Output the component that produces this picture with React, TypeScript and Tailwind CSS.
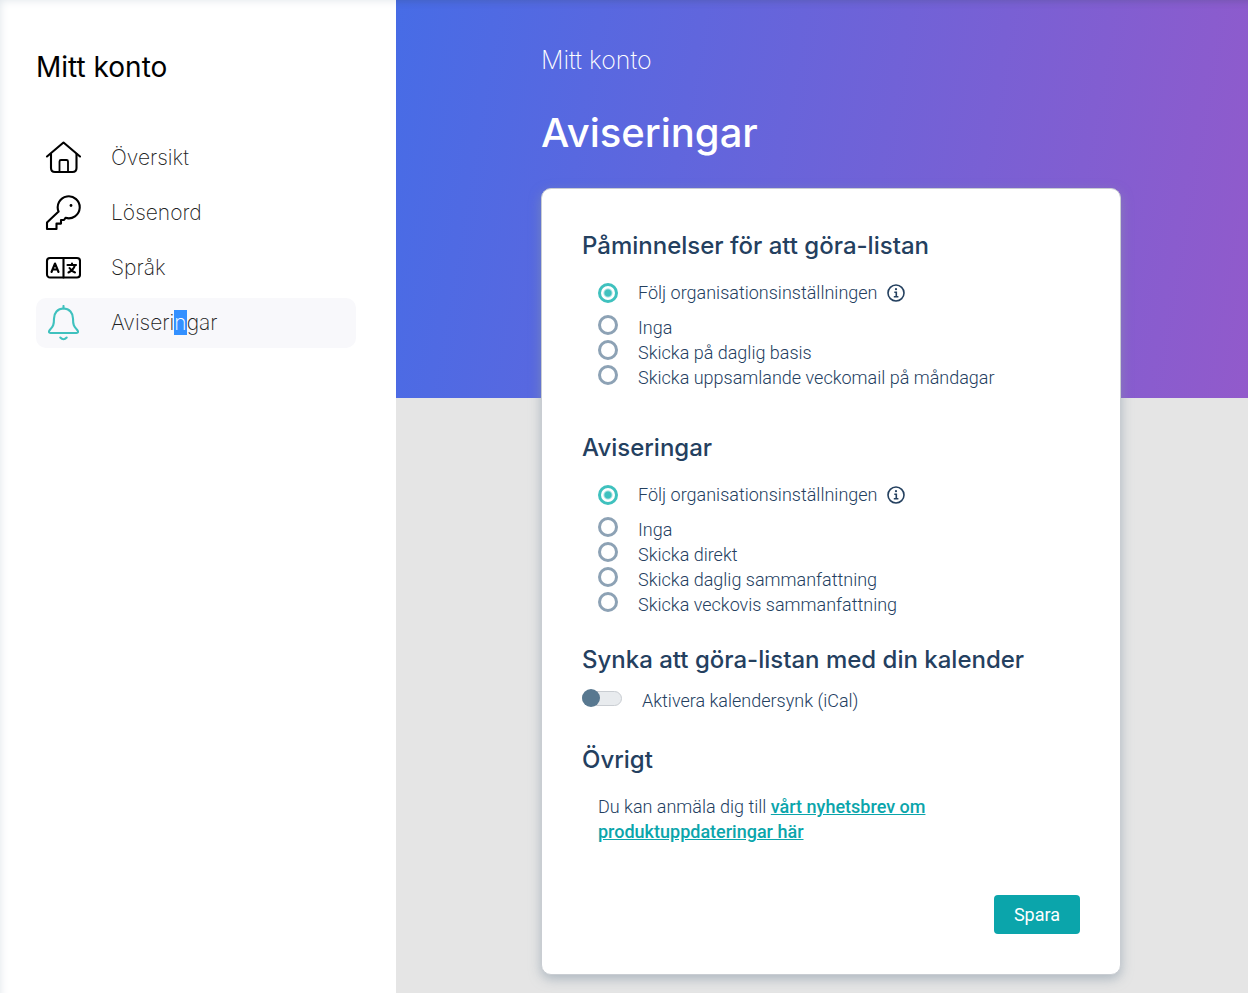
import { useState } from "react";
import type { ReactNode } from "react";

const iconProps = {
  viewBox: "0 0 36 36",
  fill: "none",
  stroke: "currentColor",
  strokeWidth: 2.1,
  strokeLinecap: "round",
  strokeLinejoin: "round",
  className: "w-9 h-9 shrink-0",
  "aria-hidden": true,
} as const;

function HomeIcon() {
  return (
    <svg {...iconProps}>
      <path d="M2 16.5 L18.5 2.5 L35 16.5" />
      <path d="M6 14 V28 Q6 32 10 32 H27.5 Q31.5 32 31.5 28 V14" />
      <path
        d="M14.5 32 V21.5 Q14.5 20 16 20 H21.5 Q23 20 23 21.5 V32"
        strokeWidth="1.8"
      />
    </svg>
  );
}

function KeyIcon() {
  return (
    <svg {...iconProps}>
      <path d="M13.6 16.6 A11 11 0 1 1 20.5 22.8 L19 25 H16 V28.6 H11.5 V34 H2 V27.5 Z" />
      <circle cx="26" cy="10.5" r="1.4" fill="currentColor" stroke="none" />
    </svg>
  );
}

function LanguageIcon() {
  return (
    <svg {...iconProps}>
      <rect x="2" y="8" width="33" height="19.5" rx="3" />
      <path d="M18.5 8 V27.5" />
      <path d="M6.5 22 L10 13.5 L13.5 22 M7.5 19.5 H12.5" />
      <path d="M22.5 15 H31 M27 13.5 V15 M29.8 15.5 Q28.5 20 23.5 22.5 M24.5 18 Q27 21.5 30 22.5" />
    </svg>
  );
}

function BellIcon() {
  return (
    <svg {...iconProps}>
      <path d="M18.5 1 V3.5" />
      <path d="M18.5 3.5 C12.5 3.5 9 8 9 13.5 C9 21 7.5 21.5 4.8 25 C3.2 27 4 28 5.5 28 H31.5 C33 28 33.8 27 32.2 25 C29.5 21.5 28 21 28 13.5 C28 8 24.5 3.5 18.5 3.5 Z" />
      <path d="M15.3 32.5 Q18.5 36 21.7 32.5" />
    </svg>
  );
}

function InfoIcon() {
  return (
    <svg
      viewBox="0 0 18 18"
      fill="none"
      stroke="currentColor"
      strokeWidth="1.6"
      className="w-[18px] h-[18px]"
      aria-hidden="true"
    >
      <circle cx="9" cy="9" r="8" />
      <circle cx="9" cy="5.2" r="1.1" fill="currentColor" stroke="none" />
      <path d="M7.3 8.2 H9.3 V12.8 M6.8 12.8 H11.4" />
    </svg>
  );
}

const navItems: { id: string; label: ReactNode; icon: ReactNode }[] = [
  { id: "oversikt", label: "Översikt", icon: <HomeIcon /> },
  { id: "losenord", label: "Lösenord", icon: <KeyIcon /> },
  { id: "sprak", label: "Språk", icon: <LanguageIcon /> },
  {
    id: "aviseringar",
    label: (
      <>
        Aviseri
        <mark className="bg-[#3390ff] text-white">n</mark>
        gar
      </>
    ),
    icon: <BellIcon />,
  },
];

const FOLLOW = "Följ organisationsinställningen";

function SectionTitle({ children }: { children: ReactNode }) {
  return (
    <span className="block font-[Inter,sans-serif] text-2xl leading-[34px] font-medium">
      {children}
    </span>
  );
}

function RadioSection({
  name,
  title,
  options,
}: {
  name: string;
  title: string;
  options: string[];
}) {
  const [value, setValue] = useState(FOLLOW);

  return (
    <fieldset>
      <legend>
        <SectionTitle>{title}</SectionTitle>
      </legend>
      <div className="mt-[17px] pl-4">
        {[FOLLOW, ...options].map((option) => (
          <div key={option} className="flex gap-2.5 items-center first:mb-2.5">
            <label
              className={
                option === FOLLOW
                  ? "flex items-center gap-5"
                  : "flex items-start gap-5"
              }
            >
              <input
                type="radio"
                name={name}
                checked={value === option}
                onChange={() => setValue(option)}
                className="appearance-none w-5 h-5 shrink-0 rounded-full border-[3px] border-[#8da2b5] checked:border-[#3fc1be] checked:bg-[radial-gradient(circle,#3fc1be_3px,transparent_5px)]"
              />
              {option}
            </label>
            {option === FOLLOW && (
              <button type="button" aria-label="Information">
                <InfoIcon />
              </button>
            )}
          </div>
        ))}
      </div>
    </fieldset>
  );
}

export default function App() {
  const [calendarSync, setCalendarSync] = useState(false);

  return (
    <div className="flex min-h-screen bg-[#e5e5e5] font-[Roboto,sans-serif]">
      <aside className="w-[396px] shrink-0 bg-white px-9 pt-[47px] shadow-[inset_8px_8px_10px_-8px_#dfe5ea]">
        <h2 className="font-[Inter,sans-serif] text-[28px] leading-10 text-black">
          Mitt konto
        </h2>
        <nav className="mt-[46px] flex flex-col gap-[5px] pr-1">
          {navItems.map((item) => (
            <a
              key={item.id}
              href={"#" + item.id}
              className={
                item.id === "aviseringar"
                  ? "flex items-center gap-[30px] h-[50px] px-[9px] rounded-[10px] bg-[#f8f8fb] text-[#3fc1be]"
                  : "flex items-center gap-[30px] h-[50px] px-[9px] rounded-[10px] text-black"
              }
            >
              {item.icon}
              <span className="font-[Inter,sans-serif] text-[21px] font-extralight text-[#222]">
                {item.label}
              </span>
            </a>
          ))}
        </nav>
      </aside>

      <main className="flex-1 min-w-0">
        <header className="bg-[linear-gradient(100deg,#476ce6,#925acb)] shadow-[inset_0_8px_8px_-8px_#33415555] pt-11 pb-[237px] pl-[18px] text-white">
          <div className="max-w-[580px] mx-auto font-[Inter,sans-serif]">
            <p className="text-[25px] leading-8 font-extralight">Mitt konto</p>
            <h1 className="mt-7 text-[40px] leading-[57px] font-medium">
              Aviseringar
            </h1>
          </div>
        </header>

        <div className="pl-[18px] pb-[18px] -mt-[210px]">
          <form
            onSubmit={(e) => e.preventDefault()}
            className="max-w-[580px] mx-auto p-10 bg-white border border-[#c9cdd2] rounded-[10px] shadow-[0_4px_12px_#8797a699] text-[#24405f] text-lg leading-[25px] font-light"
          >
            <RadioSection
              name="todo"
              title="Påminnelser för att göra-listan"
              options={[
                "Inga",
                "Skicka på daglig basis",
                "Skicka uppsamlande veckomail på måndagar",
              ]}
            />

            <div className="mt-[41px]">
              <RadioSection
                name="notifications"
                title="Aviseringar"
                options={[
                  "Inga",
                  "Skicka direkt",
                  "Skicka daglig sammanfattning",
                  "Skicka veckovis sammanfattning",
                ]}
              />
            </div>

            <section className="mt-[26px]">
              <h2>
                <SectionTitle>Synka att göra-listan med din kalender</SectionTitle>
              </h2>
              <label className="mt-[11px] flex items-start gap-5">
                <span className="relative flex items-center h-5 w-10">
                  <input
                    type="checkbox"
                    role="switch"
                    checked={calendarSync}
                    onChange={(e) => setCalendarSync(e.target.checked)}
                    className="peer appearance-none w-10 h-[15px] rounded-full border border-[#c9cdd2] bg-[#e8ebee] checked:bg-[#3fc1be]"
                  />
                  <span className="absolute left-0 w-[18px] h-[18px] rounded-full bg-[#587890] peer-checked:left-[22px]" />
                </span>
                Aktivera kalendersynk (iCal)
              </label>
            </section>

            <section className="mt-[30px]">
              <h2>
                <SectionTitle>Övrigt</SectionTitle>
              </h2>
              <p className="mt-[17px] pl-4 max-w-[380px]">
                Du kan anmäla dig till{" "}
                <a href="#nyhetsbrev" className="font-medium underline text-[#0ba5ab]">
                  vårt nyhetsbrev om produktuppdateringar här
                </a>
              </p>
            </section>

            <div className="mt-[51px] flex justify-end">
              <button
                type="submit"
                className="h-[39px] px-5 rounded bg-[#0ba5ab] text-white font-normal"
              >
                Spara
              </button>
            </div>
          </form>
        </div>
      </main>
    </div>
  );
}
